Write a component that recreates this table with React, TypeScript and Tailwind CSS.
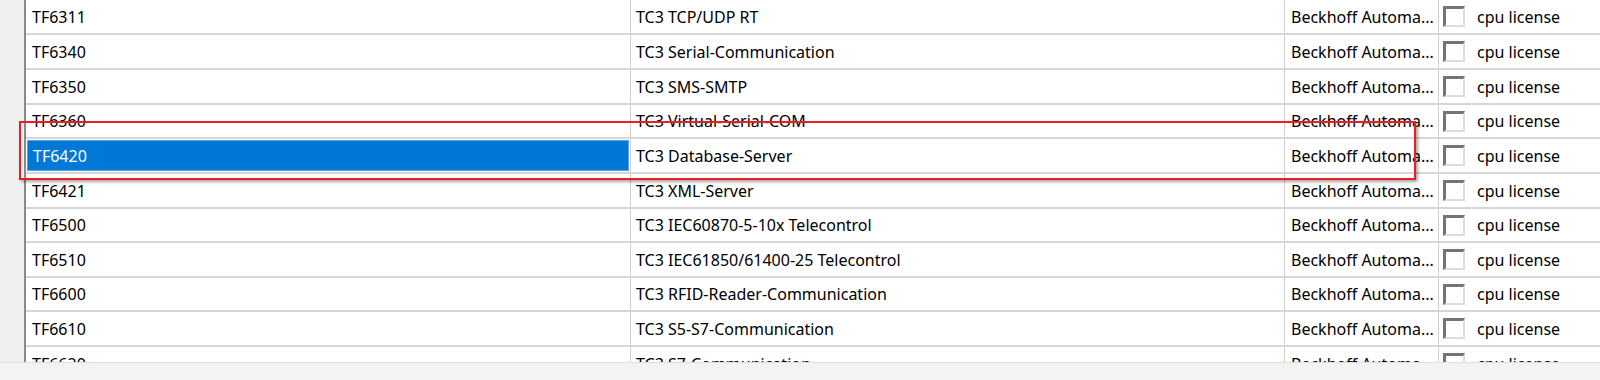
import React from "react";

type Row = { id: string; name: string; h: string };

const rows: Row[] = [
  { id: "TF6311", name: "TC3 TCP/UDP RT", h: "h-[35px]" },
  { id: "TF6340", name: "TC3 Serial-Communication", h: "h-[35px]" },
  { id: "TF6350", name: "TC3 SMS-SMTP", h: "h-[35px]" },
  { id: "TF6360", name: "TC3 Virtual-Serial-COM", h: "h-[34px]" },
  { id: "TF6420", name: "TC3 Database-Server", h: "h-[35px]" },
  { id: "TF6421", name: "TC3 XML-Server", h: "h-[35px]" },
  { id: "TF6500", name: "TC3 IEC60870-5-10x Telecontrol", h: "h-[34px]" },
  { id: "TF6510", name: "TC3 IEC61850/61400-25 Telecontrol", h: "h-[35px]" },
  { id: "TF6600", name: "TC3 RFID-Reader-Communication", h: "h-[34px]" },
  { id: "TF6610", name: "TC3 S5-S7-Communication", h: "h-[35px]" },
  { id: "TF6620", name: "TC3 S7-Communication", h: "h-[35px]" },
];

const Checkbox = () => (
  <div className="w-[22px] h-[21px] shrink-0 bg-white border-t-[3px] border-l-[3px] border-r-2 border-b-2 border-t-[#747474] border-l-[#747474] border-r-[#dcdcdc] border-b-[#dcdcdc]" />
);

const TableRow = ({ row, selected }: { row: Row; selected: boolean }) => {
  return (
    <div className={`${row.h} shrink-0 flex border-b-2 border-[#d6d6d6]`}>
      <div className="w-[605px] shrink-0 flex items-center border-r border-[#cfcfcf]">
        {selected ? (
          <div className="m-px h-[31px] w-full flex items-center bg-[#0078d7] border border-[#5aa3e6] text-white pl-[5px]">
            {row.id}
          </div>
        ) : (
          <span className="pl-[6px]">{row.id}</span>
        )}
      </div>
      <div className="w-[654px] shrink-0 flex items-center border-r border-[#cfcfcf] pl-[5px] whitespace-nowrap">
        {row.name}
      </div>
      <div className="w-[154px] shrink-0 flex items-center border-r border-[#cfcfcf] pl-[6px] whitespace-nowrap overflow-hidden">
        Beckhoff Automa...
      </div>
      <div className="flex-1 flex items-center pl-[4px] gap-[12px] whitespace-nowrap">
        <Checkbox />
        <span>cpu license</span>
      </div>
    </div>
  );
};

export default function App() {
  return (
    <div
      className="relative w-[1600px] h-[380px] bg-[#f0f0f0] flex flex-col overflow-hidden text-[16px] text-black"
      style={{ fontFamily: '"Noto Sans", "Open Sans", sans-serif' }}
    >
      <div className="h-[362px] flex">
        <div className="w-[24px] shrink-0" />
        <div className="flex-1 bg-white border-l-2 border-[#8a8a8a] flex flex-col overflow-hidden">
          {rows.map((r) => (
            <TableRow key={r.id} row={r} selected={r.id === "TF6420"} />
          ))}
        </div>
      </div>
      <div className="flex-1 border-t border-[#dedede] bg-[#f3f3f3]" />

      <div className="absolute left-[19px] top-[121px] w-[1397px] h-[59px] border-2 border-[#ee1c24] shadow-[2px_2px_3px_rgba(0,0,0,0.35)]" />
    </div>
  );
}
